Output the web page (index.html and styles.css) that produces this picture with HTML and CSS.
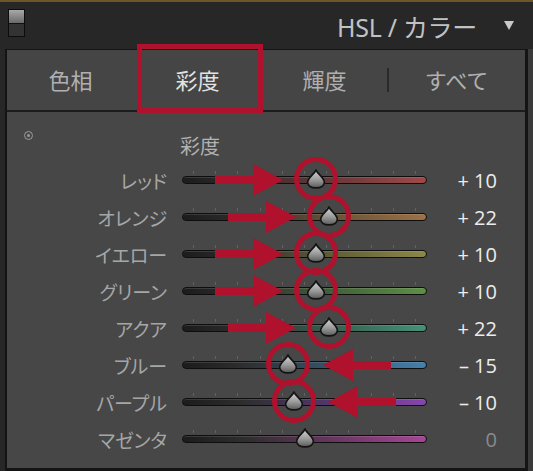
FILE: index.html
```html
<!DOCTYPE html>
<html lang="ja">
<head>
<meta charset="utf-8">
<title>HSL / カラー</title>
<link rel="stylesheet" href="styles.css">
</head>
<body>
<div class="topline"></div>
<header class="header">
  <div class="app-icon"><span class="app-icon-top"></span><span class="app-icon-bottom"></span></div>
  <div class="title">HSL / カラー</div>
  <span class="caret"></span>
</header>
<div class="main">
  <section class="panel">
    <nav class="tabs">
      <div class="tab">色相</div>
      <div class="tab sep active">彩度<span class="mark-box"></span></div>
      <div class="tab">輝度</div>
      <div class="tab sep">すべて</div>
    </nav>
    <div class="content">
      <div class="heading-row">
        <span class="target-icon"></span>
        <span class="heading">彩度</span>
      </div>

      <div class="row">
        <span class="label">レッド</span>
        <div class="slider">
          <div class="track c-red"></div>
          <svg class="arrow" style="left:33px" viewBox="0 0 68 32"><polygon points="0,12 38,12 38,0 68,16 38,32 38,20 0,20"/></svg>
          <svg class="thumb" style="left:124px" viewBox="0 0 18 18"><use href="#drop"/></svg>
          <span class="ring" style="left:112px"></span>
        </div>
        <span class="value">+ 10</span>
      </div>

      <div class="row">
        <span class="label">オレンジ</span>
        <div class="slider">
          <div class="track c-orange"></div>
          <svg class="arrow" style="left:46px" viewBox="0 0 68 32"><polygon points="0,12 38,12 38,0 68,16 38,32 38,20 0,20"/></svg>
          <svg class="thumb" style="left:137px" viewBox="0 0 18 18"><use href="#drop"/></svg>
          <span class="ring" style="left:125px"></span>
        </div>
        <span class="value">+ 22</span>
      </div>

      <div class="row">
        <span class="label">イエロー</span>
        <div class="slider">
          <div class="track c-yellow"></div>
          <svg class="arrow" style="left:33px" viewBox="0 0 68 32"><polygon points="0,12 38,12 38,0 68,16 38,32 38,20 0,20"/></svg>
          <svg class="thumb" style="left:124px" viewBox="0 0 18 18"><use href="#drop"/></svg>
          <span class="ring" style="left:112px"></span>
        </div>
        <span class="value">+ 10</span>
      </div>

      <div class="row">
        <span class="label">グリーン</span>
        <div class="slider">
          <div class="track c-green"></div>
          <svg class="arrow" style="left:33px" viewBox="0 0 68 32"><polygon points="0,12 38,12 38,0 68,16 38,32 38,20 0,20"/></svg>
          <svg class="thumb" style="left:124px" viewBox="0 0 18 18"><use href="#drop"/></svg>
          <span class="ring" style="left:112px"></span>
        </div>
        <span class="value">+ 10</span>
      </div>

      <div class="row">
        <span class="label">アクア</span>
        <div class="slider">
          <div class="track c-aqua"></div>
          <svg class="arrow" style="left:46px" viewBox="0 0 68 32"><polygon points="0,12 38,12 38,0 68,16 38,32 38,20 0,20"/></svg>
          <svg class="thumb" style="left:137px" viewBox="0 0 18 18"><use href="#drop"/></svg>
          <span class="ring" style="left:125px"></span>
        </div>
        <span class="value">+ 22</span>
      </div>

      <div class="row">
        <span class="label">ブルー</span>
        <div class="slider">
          <div class="track c-blue"></div>
          <svg class="arrow" style="left:141px" viewBox="0 0 68 32"><polygon points="68,12 30,12 30,0 0,16 30,32 30,20 68,20"/></svg>
          <svg class="thumb" style="left:96px" viewBox="0 0 18 18"><use href="#drop"/></svg>
          <span class="ring" style="left:84px"></span>
        </div>
        <span class="value">– 15</span>
      </div>

      <div class="row">
        <span class="label">パープル</span>
        <div class="slider">
          <div class="track c-purple"></div>
          <svg class="arrow" style="left:146px" viewBox="0 0 68 32"><polygon points="68,12 30,12 30,0 0,16 30,32 30,20 68,20"/></svg>
          <svg class="thumb" style="left:102px" viewBox="0 0 18 18"><use href="#drop"/></svg>
          <span class="ring" style="left:90px"></span>
        </div>
        <span class="value">– 10</span>
      </div>

      <div class="row">
        <span class="label">マゼンタ</span>
        <div class="slider">
          <div class="track c-magenta"></div>
          <svg class="thumb" style="left:113px" viewBox="0 0 18 18"><use href="#drop"/></svg>
        </div>
        <span class="value zero">0</span>
      </div>
    </div>
  </section>
  <div class="strip"></div>
</div>

<svg class="defs" width="0" height="0">
  <defs>
    <linearGradient id="dropfill" x1="0" y1="0" x2="0" y2="1">
      <stop offset="0" stop-color="#d6d6d6"/>
      <stop offset="0.55" stop-color="#9a9a9a"/>
      <stop offset="1" stop-color="#5a5a5a"/>
    </linearGradient>
    <path id="drop" d="M9 1 C10.5 4.5 16.5 8 16.5 12 C16.5 15.2 13.2 17 9 17 C4.8 17 1.5 15.2 1.5 12 C1.5 8 7.5 4.5 9 1 Z" fill="url(#dropfill)" stroke="#141414" stroke-width="1.5"/>
  </defs>
</svg>
</body>
</html>
```

FILE: styles.css
```css
* { box-sizing: border-box; }

body {
  margin: 0;
  width: 533px;
  height: 471px;
  overflow: hidden;
  background: #272727;
  font-family: "Noto Sans CJK JP", "Noto Sans", sans-serif;
}

.topline {
  height: 2px;
  background: #6e5726;
}

.header {
  height: 47px;
  display: flex;
  align-items: center;
  padding: 0 19px 0 8px;
}

.app-icon {
  width: 17px;
  height: 28px;
  border: 1px solid #0c0c0c;
  display: flex;
  flex-direction: column;
  align-self: flex-start;
  margin-top: 7px;
}

.app-icon-top {
  flex: 1;
  background: linear-gradient(#a8a8a8, #6a6a6a);
}

.app-icon-bottom {
  flex: 1;
  background: #333;
  border-top: 1px solid #111;
}

.title {
  margin-left: auto;
  font-family: "Noto Sans", "Noto Sans CJK JP", sans-serif;
  font-size: 25px;
  color: #c2c2c2;
  letter-spacing: -0.3px;
}

.caret {
  margin-left: 27px;
  width: 0;
  height: 0;
  border-left: 5.5px solid transparent;
  border-right: 5.5px solid transparent;
  border-top: 9px solid #c8c8c8;
}

.main {
  display: flex;
  height: 422px;
}

.panel {
  width: 523px;
  margin-left: 5px;
  border-left: 2px solid #141414;
  border-right: 3px solid #141414;
  border-top: 1px solid #141414;
  border-bottom: 3px solid #141414;
  background: #474747;
  display: flex;
  flex-direction: column;
}

.strip {
  flex: 1;
  background: #3a3a3a;
}

.tabs {
  height: 62px;
  display: grid;
  grid-template-columns: 127px 127px 127px 1fr;
  background: #454545;
  border-bottom: 2px solid #1c1c1c;
}

.tab {
  position: relative;
  display: flex;
  align-items: center;
  justify-content: center;
  font-size: 22px;
  color: #b0b0b0;
  padding-bottom: 2px;
}

.tab.active {
  color: #e2e2e2;
}

.tab.sep::before {
  content: "";
  position: absolute;
  left: -1px;
  top: 18px;
  width: 2px;
  height: 24px;
  background: #2a2a2a;
}

.tab.active::before {
  display: none;
}

.mark-box {
  position: absolute;
  left: 3px;
  top: -6px;
  width: 126px;
  height: 69px;
  border: 5px solid #b0112c;
}

.content {
  flex: 1;
  padding-top: 17px;
  background: #474747;
}

.heading-row {
  height: 33px;
  display: flex;
  align-items: center;
}

.target-icon {
  align-self: flex-start;
  margin-top: 2px;
  margin-left: 17px;
  width: 9px;
  height: 9px;
  border-radius: 50%;
  border: 1.5px solid #9a9a9a;
  display: flex;
  align-items: center;
  justify-content: center;
}

.target-icon::after {
  content: "";
  width: 3px;
  height: 3px;
  border-radius: 50%;
  background: #9a9a9a;
}

.heading {
  margin-left: 147px;
  font-size: 20px;
  color: #b2b2b2;
}

.row {
  height: 37px;
  display: flex;
  align-items: center;
}

.label {
  width: 160px;
  text-align: right;
  font-size: 19px;
  color: #a6a6a6;
  font-feature-settings: "palt";
}

.slider {
  position: relative;
  width: 245px;
  height: 37px;
  margin-left: 15px;
  display: flex;
  align-items: center;
}

.slider::before {
  content: "";
  position: absolute;
  left: 11px;
  top: 9px;
  width: 224px;
  height: 3px;
  background: repeating-linear-gradient(to right, #626262 0 1px, transparent 1px 22.2px);
}

.track {
  width: 100%;
  height: 8px;
  border: 1px solid #0e0e0e;
  border-radius: 4px;
  margin-top: -1px;
  box-shadow: inset 0 1px 0 rgba(255, 255, 255, 0.12);
}

.c-red     { background: linear-gradient(to right, #1c1c1c 0%, #2e2e2e 25%, #663838 60%, #a04848 100%); }
.c-orange  { background: linear-gradient(to right, #1c1c1c 0%, #2e2e2e 25%, #665035 60%, #9c7246 100%); }
.c-yellow  { background: linear-gradient(to right, #1c1c1c 0%, #2e2e2e 25%, #5e5c36 60%, #8c8848 100%); }
.c-green   { background: linear-gradient(to right, #1c1c1c 0%, #2e2e2e 25%, #435e3a 60%, #5d9046 100%); }
.c-aqua    { background: linear-gradient(to right, #1c1c1c 0%, #2e2e2e 25%, #365e4f 60%, #449277 100%); }
.c-blue    { background: linear-gradient(to right, #1c1c1c 0%, #2e2e2e 25%, #34546a 60%, #4580ac 100%); }
.c-purple  { background: linear-gradient(to right, #1c1c1c 0%, #2e2e2e 25%, #52366c 60%, #8646ac 100%); }
.c-magenta { background: linear-gradient(to right, #1c1c1c 0%, #2e2e2e 25%, #64365e 60%, #a84696 100%); }

.thumb {
  position: absolute;
  top: 7px;
  width: 20px;
  height: 20px;
}

.arrow {
  position: absolute;
  top: 2px;
  width: 68px;
  height: 32px;
  fill: #b0112c;
}

.ring {
  position: absolute;
  top: -5px;
  width: 44px;
  height: 44px;
  border: 5px solid #b0112c;
  border-radius: 50%;
}

.value {
  width: 70px;
  text-align: right;
  font-family: "Open Sans", "Noto Sans", sans-serif;
  font-size: 20px;
  color: #ececec;
}

.value.zero {
  color: #8a8a8a;
}

.defs {
  position: absolute;
  left: 0;
  top: 0;
}
```
